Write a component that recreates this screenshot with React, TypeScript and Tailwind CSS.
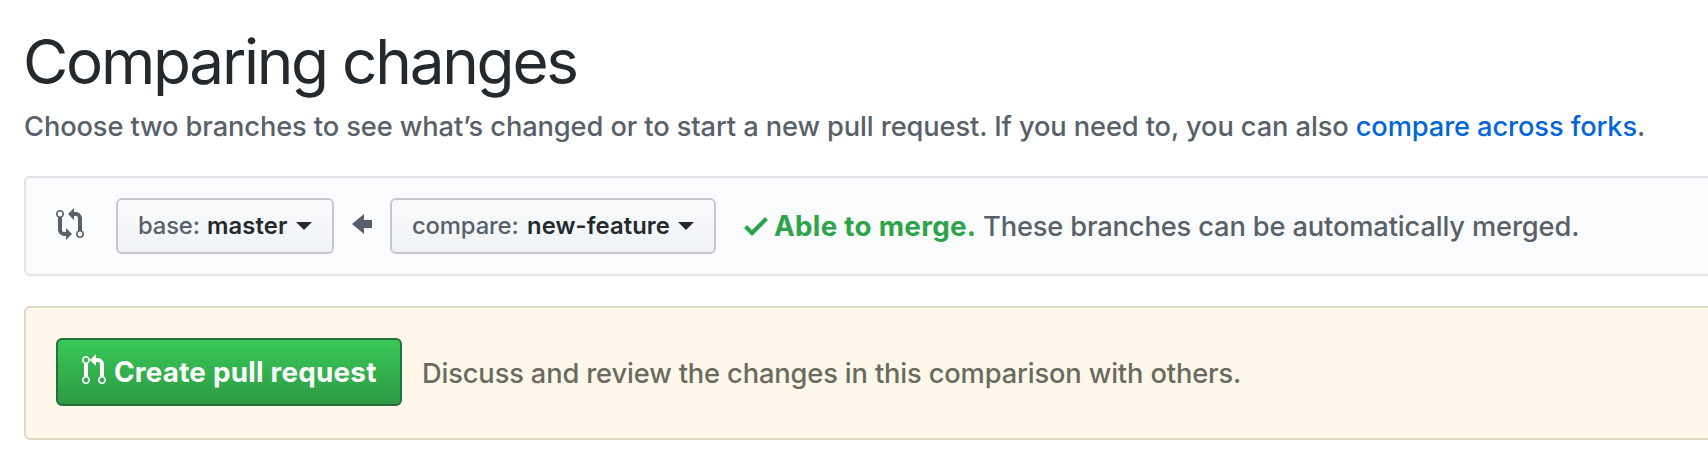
import type { ReactNode } from "react";

const GIT_COMPARE =
  "M5 12H4c-.27-.02-.48-.11-.69-.31-.21-.2-.3-.42-.31-.69V4.72A1.993 1.993 0 0 0 2 1a1.993 1.993 0 0 0-1 3.72V11c.03.78.34 1.47.94 2.06.6.59 1.28.91 2.06.94h1v2l3-3-3-3v2zM2 1.8c.66 0 1.2.55 1.2 1.2 0 .65-.55 1.2-1.2 1.2C1.35 4.2.8 3.65.8 3c0-.65.55-1.2 1.2-1.2zm11 9.48V5c-.03-.78-.34-1.47-.94-2.06-.6-.59-1.28-.91-2.06-.94H9V0L6 3l3 3V4h1c.27.02.48.11.69.31.21.2.3.42.31.69v6.28A1.993 1.993 0 0 0 12 15a1.993 1.993 0 0 0 1-3.72zm-1 2.92c-.66 0-1.2-.55-1.2-1.2 0-.65.55-1.2 1.2-1.2.65 0 1.2.55 1.2 1.2 0 .65-.55 1.2-1.2 1.2z";
const GIT_PULL_REQUEST =
  "M11 11.28V5c-.03-.78-.34-1.47-.94-2.06C9.46 2.35 8.78 2.03 8 2H7V0L4 3l3 3V4h1c.27.02.48.11.69.31.21.2.3.42.31.69v6.28A1.993 1.993 0 0 0 10 15a1.993 1.993 0 0 0 1-3.72zm-1 2.92c-.66 0-1.2-.55-1.2-1.2 0-.65.55-1.2 1.2-1.2.65 0 1.2.55 1.2 1.2 0 .65-.55 1.2-1.2 1.2zM4 3c0-1.11-.89-2-2-2a1.993 1.993 0 0 0-1 3.72v6.56A1.993 1.993 0 0 0 2 15a1.993 1.993 0 0 0 1-3.72V4.72c.59-.34 1-.98 1-1.72zm-.8 10c0 .66-.55 1.2-1.2 1.2-.65 0-1.2-.55-1.2-1.2 0-.65.55-1.2 1.2-1.2.65 0 1.2.55 1.2 1.2zM2 4.2C1.34 4.2.8 3.65.8 3c0-.65.55-1.2 1.2-1.2.65 0 1.2.55 1.2 1.2 0 .65-.55 1.2-1.2 1.2z";

function BranchButton({ className, children }: { className: string; children: ReactNode }) {
  return (
    <button
      className={`flex h-14 shrink-0 items-center rounded-md border-2 border-[#c5c9cd] bg-linear-to-b from-[#fafbfc] to-[#eff3f6] pl-5 text-left text-[23.8px] leading-9 ${className}`}
    >
      {children}
      <svg className="ml-1.5 h-2 w-4 shrink-0" viewBox="0 0 16 8" fill="#24292e">
        <path d="M0 0h16L8 8z" />
      </svg>
    </button>
  );
}

export default function App() {
  return (
    <div className="h-[454px] w-full overflow-hidden bg-white pl-6 font-['Inter',sans-serif] text-[27.25px] font-[450] tracking-[-0.14px] whitespace-nowrap text-[#586069]">
      <h1 className="-ml-px h-[100px] pt-[23px] text-[62px] leading-[78px] font-normal tracking-[-2.25px] text-[#24292e]">
        Comparing changes
      </h1>
      <p className="h-[76px] pt-[6px] leading-[42px] tracking-[-0.11px]">
        Choose two branches to see what’s changed or to start a new pull request. If you need to, you can also{" "}
        <a className="text-[#0366d6]">compare across forks</a>.
      </p>

      <section className="-mr-4 flex h-[100px] items-center rounded-md border-2 border-[#e1e4e8] bg-[#fafbfc] pl-[30px]">
        <svg className="-mt-1 mr-8 h-8 w-7 shrink-0" viewBox="0 0 14 16" fill="#586069">
          <path d={GIT_COMPARE} />
        </svg>
        <BranchButton className="w-[218px]">
          <span className="w-[69px]">base:</span>
          <b className="w-[83px] font-semibold tracking-[0.1px] text-[#24292e]">master</b>
        </BranchButton>
        <svg className="-mt-1 mr-[18px] ml-[18px] h-8 w-5 shrink-0" viewBox="0 0 10 16" fill="#586069">
          <path d="M6 3L0 8l6 5v-3h4V6H6V3z" />
        </svg>
        <BranchButton className="w-[326px]">
          <span className="w-[115px]">compare:</span>
          <b className="w-[145px] font-semibold tracking-[0.1px] text-[#24292e]">new-feature</b>
        </BranchButton>
        <svg className="mr-1.5 ml-7 h-8 w-6 shrink-0" viewBox="0 0 12 16" fill="#2ea44a">
          <path d="M12 5l-8 8-4-4 1.5-1.5L4 10l6.5-6.5L12 5z" />
        </svg>
        <b className="w-[209px] pt-0.5 text-[27.8px] font-bold tracking-[0.28px] text-[#2ea44a]">Able to merge.</b>
        <span className="pt-0.5">These branches can be automatically merged.</span>
      </section>

      <section className="-mr-4 mt-[30px] flex h-[134px] items-center rounded-md border-2 border-[#dfd8c2] bg-[#fff8ea] pl-[30px] text-[#6a6a5e]">
        <button className="-mt-0.5 flex h-[68px] w-[346px] shrink-0 items-center rounded-md border-2 border-[#276f3a] bg-linear-to-b from-[#38c858] to-[#2e9a44] pl-6 text-left text-white">
          <svg className="-mt-1 mr-[8px] h-8 w-6 shrink-0" viewBox="0 0 12 16" fill="currentColor">
            <path d={GIT_PULL_REQUEST} />
          </svg>
          <b className="pt-px text-[27.8px] font-bold tracking-[0.24px]">Create pull request</b>
        </button>
        <span className="ml-5 pt-0.5">Discuss and review the changes in this comparison with others.</span>
      </section>
    </div>
  );
}
